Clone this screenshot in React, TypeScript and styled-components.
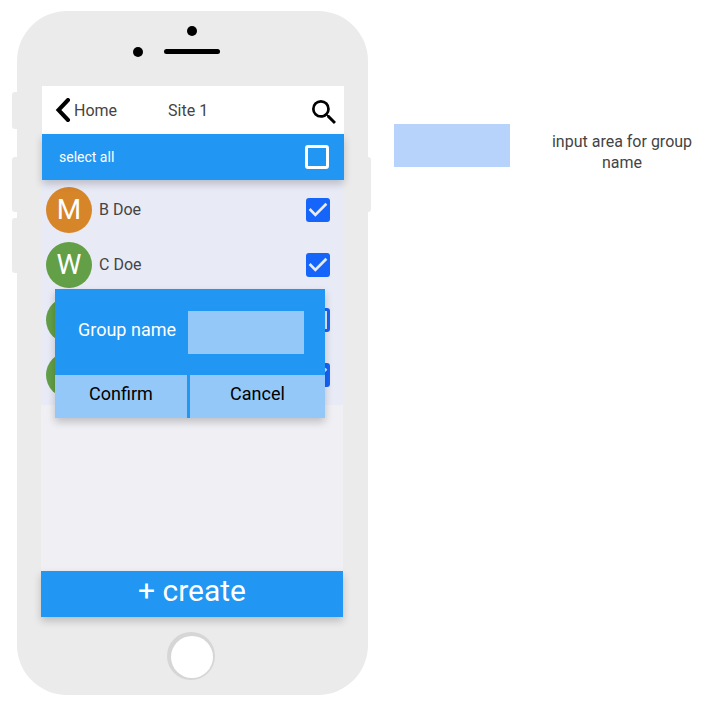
import React, { useState } from "react";
import styled, { createGlobalStyle } from "styled-components";

const color = {
  blue: "#2196f3",
  paleBlue: "#93c8f8",
  note: "#b7d3fc",
  check: "#1565fb",
  shell: "#ebebeb",
  list: "#e8eaf6",
  empty: "#efeff4",
  text: "#444444",
};
const shadow = "0 4px 8px rgba(0, 0, 0, 0.2)";

const GlobalStyle = createGlobalStyle`
  *, *::before, *::after { box-sizing: border-box; }
  body {
    margin: 0;
    background: #ffffff;
    color: ${color.text};
    font: 16px/21px Roboto, "Liberation Sans", sans-serif;
  }
  button, input { font: inherit; }
`;

const Page = styled.main`
  display: grid;
  grid-template-columns: 351fr 299fr;
  align-items: start;
  gap: 26px;
  padding: 11px 24px 15px 17px;
`;

const Phone = styled.section`
  position: relative;
  display: flex;
  flex-direction: column;
  border-radius: 50px;
  background: ${color.shell};
`;

const SideKey = styled.span<{ $side: "left" | "right"; $top: number; $height: number }>`
  position: absolute;
  top: ${(p) => p.$top}px;
  ${(p) => (p.$side === "left" ? "left: -5px" : "right: -3px")};
  width: 8px;
  height: ${(p) => p.$height}px;
  border-radius: 3px;
  background: ${color.shell};
`;

const Earpiece = styled.svg`
  display: block;
  align-self: center;
  width: 120px;
  height: 75px;
`;

const ScreenTop = styled.div`
  position: relative;
  z-index: 1;
  margin: 0 24px 0 25px;
`;

const ScreenBody = styled.div`
  position: relative;
  margin: 0 25px 0 24px;
`;

const Header = styled.header`
  display: flex;
  align-items: center;
  height: 48px;
  padding: 0 8px 0 13px;
  background: #ffffff;
`;

const BackLink = styled.a`
  display: flex;
  align-items: center;
  gap: 3px;
  color: inherit;
  text-decoration: none;
`;

const Title = styled.h1`
  margin: 0 auto 0 51px;
  font-size: 16px;
  font-weight: 400;
`;

const IconButton = styled.button`
  display: grid;
  place-items: center;
  padding: 4px 0 0;
  border: 0;
  background: none;
  cursor: pointer;
`;

const SelectBar = styled.div`
  display: flex;
  align-items: center;
  justify-content: space-between;
  height: 46px;
  padding: 0 15px 0 17px;
  background: ${color.blue};
  box-shadow: ${shadow};
  color: #ffffff;
  font-size: 14px;
`;

const List = styled.ul`
  margin: 0;
  padding: 2px 13px 3px 5px;
  background: ${color.list};
  list-style: none;
`;

const Row = styled.li`
  display: flex;
  align-items: center;
  gap: 7px;
  height: 55px;
`;

const Avatar = styled.span<{ $tone: string }>`
  display: grid;
  place-items: center;
  width: 46px;
  height: 46px;
  border-radius: 50%;
  background: ${(p) => p.$tone};
  color: #ffffff;
  font-size: 28px;
  line-height: 46px;
`;

const Name = styled.label`
  flex: 1;
`;

const BoxFrame = styled.span`
  display: grid;
  width: 24px;
  height: 24px;

  & > * {
    grid-area: 1 / 1;
  }
`;

const BoxInput = styled.input<{ $tone: string }>`
  appearance: none;
  width: 24px;
  height: 24px;
  margin: 0;
  border: 3px solid ${(p) => p.$tone};
  border-radius: 3px;
  cursor: pointer;

  &:checked {
    background: ${(p) => p.$tone};
  }
  & + svg {
    visibility: hidden;
    pointer-events: none;
  }
  &:checked + svg {
    visibility: visible;
  }
`;

const EmptyArea = styled.div`
  height: 166px;
  background: ${color.empty};
`;

const CreateButton = styled.button`
  display: block;
  width: 100%;
  height: 46px;
  padding: 0 0 6px;
  border: 0;
  background: ${color.blue};
  box-shadow: ${shadow};
  color: #ffffff;
  font-size: 30px;
  line-height: 40px;
  cursor: pointer;
`;

const Dialog = styled.form`
  position: absolute;
  top: 109px;
  left: 14px;
  right: 18px;
  z-index: 2;
  background: ${color.blue};
  box-shadow: ${shadow};
  font-size: 18px;
`;

const Field = styled.div`
  display: flex;
  align-items: center;
  gap: 12px;
  padding: 22px 21px 21px 23px;
  color: #ffffff;
`;

const FieldLabel = styled.label`
  flex: none;
  padding-bottom: 6px;
`;

const FieldInput = styled.input`
  flex: 1;
  min-width: 0;
  height: 43px;
  padding: 0 8px;
  border: 0;
  border-radius: 0;
  background: ${color.paleBlue};
  color: #000000;
`;

const Actions = styled.div`
  display: grid;
  grid-template-columns: 132fr 135fr;
  gap: 3px;
`;

const ActionButton = styled.button`
  height: 43px;
  padding: 0 0 6px;
  border: 0;
  background: ${color.paleBlue};
  color: #000000;
  cursor: pointer;
`;

const HomeButton = styled.button`
  align-self: center;
  margin: 15px 3px 15px 0;
  padding: 0;
  border: 0;
  background: none;
  cursor: pointer;

  svg {
    display: block;
  }
`;

const Legend = styled.aside`
  display: flex;
  align-items: flex-start;
  gap: 41px;
  padding-top: 113px;
`;

const Swatch = styled.span`
  flex: none;
  width: 116px;
  height: 43px;
  background: ${color.note};
`;

const LegendText = styled.p`
  flex: 1;
  margin: 0;
  padding-top: 7px;
  text-align: center;
`;

type CheckBoxProps = {
  id: string;
  tone: string;
  checked: boolean;
  label?: string;
  onChange: (checked: boolean) => void;
};

function CheckBox({ id, tone, checked, label, onChange }: CheckBoxProps) {
  return (
    <BoxFrame>
      <BoxInput
        type="checkbox"
        id={id}
        $tone={tone}
        aria-label={label}
        checked={checked}
        onChange={(e) => onChange(e.target.checked)}
      />
      <svg width="24" height="24" viewBox="3 3 18 18" aria-hidden="true">
        <path d="M10 17l-5-5 1.41-1.41L10 14.17l7.59-7.59L19 8z" fill={color.list} />
      </svg>
    </BoxFrame>
  );
}

const green = "#629f47";
const members = [
  { id: "b", initial: "M", name: "B Doe", tone: "#d68529", checked: true },
  { id: "c", initial: "W", name: "C Doe", tone: green, checked: true },
  { id: "d", initial: "", name: "", tone: green, checked: false },
  { id: "e", initial: "", name: "", tone: green, checked: true },
];

export default function App() {
  const [rows, setRows] = useState(members);
  const [all, setAll] = useState(false);
  const [group, setGroup] = useState("");

  const toggleAll = (checked: boolean) => {
    setAll(checked);
    setRows(rows.map((r) => ({ ...r, checked })));
  };
  const toggle = (id: string, checked: boolean) =>
    setRows(rows.map((r) => (r.id === id ? { ...r, checked } : r)));

  return (
    <>
      <GlobalStyle />
      <Page>
        <Phone>
          <SideKey $side="left" $top={81} $height={37} />
          <SideKey $side="left" $top={146} $height={55} />
          <SideKey $side="left" $top={207} $height={55} />
          <SideKey $side="right" $top={146} $height={55} />
          <Earpiece viewBox="0 0 120 75" aria-hidden="true">
            <circle cx="59" cy="20" r="5" />
            <circle cx="5" cy="41" r="5" />
            <rect x="31" y="38" width="56" height="5" rx="2.5" />
          </Earpiece>

          <ScreenTop>
            <Header>
              <BackLink href="#home">
                <svg width="16" height="24" viewBox="0 0 16 24" aria-hidden="true">
                  <path
                    d="M13 2L3.5 12l9.5 10"
                    fill="none"
                    stroke="#000"
                    strokeWidth="4"
                    strokeLinecap="round"
                  />
                </svg>
                Home
              </BackLink>
              <Title>Site 1</Title>
              <IconButton type="button" aria-label="Search">
                <svg width="24" height="24" viewBox="3 3 17.5 17.5" aria-hidden="true">
                  <path d="M15.5 14h-.79l-.28-.27A6.471 6.471 0 0 0 16 9.5 6.5 6.5 0 1 0 9.5 16c1.61 0 3.09-.59 4.23-1.57l.27.28v.79l5 4.99L20.49 19l-4.99-5zm-6 0C7.01 14 5 11.99 5 9.5S7.01 5 9.5 5 14 7.01 14 9.5 11.99 14 9.5 14z" />
                </svg>
              </IconButton>
            </Header>
            <SelectBar>
              <label htmlFor="all">select all</label>
              <CheckBox id="all" tone="#ffffff" checked={all} onChange={toggleAll} />
            </SelectBar>
          </ScreenTop>

          <ScreenBody>
            <List>
              {rows.map((r) => (
                <Row key={r.id}>
                  <Avatar $tone={r.tone} aria-hidden="true">
                    {r.initial}
                  </Avatar>
                  <Name htmlFor={r.id}>{r.name}</Name>
                  <CheckBox
                    id={r.id}
                    tone={color.check}
                    label={r.name ? undefined : "Member"}
                    checked={r.checked}
                    onChange={(c) => toggle(r.id, c)}
                  />
                </Row>
              ))}
            </List>
            <EmptyArea />
            <CreateButton type="button">+ create</CreateButton>

            <Dialog onSubmit={(e) => e.preventDefault()}>
              <Field>
                <FieldLabel htmlFor="group">Group name</FieldLabel>
                <FieldInput id="group" value={group} onChange={(e) => setGroup(e.target.value)} />
              </Field>
              <Actions>
                <ActionButton type="submit">Confirm</ActionButton>
                <ActionButton type="button">Cancel</ActionButton>
              </Actions>
            </Dialog>
          </ScreenBody>

          <HomeButton type="button" aria-label="Home button">
            <svg width="48" height="48" viewBox="0 0 48 48" aria-hidden="true">
              <circle cx="24" cy="24" r="24" fill="#d6d6d6" />
              <circle cx="25" cy="25" r="21" fill="#fff" />
            </svg>
          </HomeButton>
        </Phone>

        <Legend>
          <Swatch />
          <LegendText>input area for group name</LegendText>
        </Legend>
      </Page>
    </>
  );
}
